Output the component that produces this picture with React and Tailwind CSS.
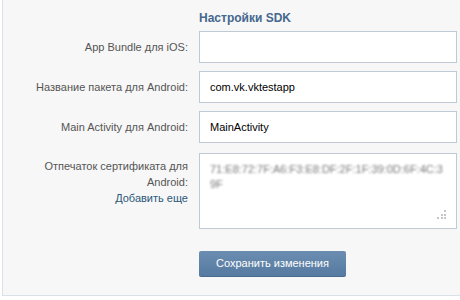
import React from "react";

const rows = [
  { label: "App Bundle для iOS:", value: "" },
  { label: "Название пакета для Android:", value: "com.vk.vktestapp" },
  { label: "Main Activity для Android:", value: "MainActivity" },
];

export default function App() {
  return (
    <div className="w-[460px] h-[300px] overflow-hidden bg-white font-['Liberation_Sans',Arial,sans-serif]">
      <div className="ml-[2px] w-[480px] h-[296px] bg-[#f7f7f7] border-l border-b border-[#dae1e8]">
        <div className="pl-[196px] pt-[9px] h-[31px] text-[12px] font-bold text-[#45688e]">
          Настройки SDK
        </div>

        <div className="flex flex-col gap-[8px]">
          {rows.map((row) => (
            <div key={row.label} className="flex items-center">
              <div className="w-[185px] text-right text-[11px] text-[#555]">
                {row.label}
              </div>
              <div className="ml-[11px] w-[258px] h-[32px] bg-white border border-[#c0cad5] flex items-center px-[10px] text-[11px] text-black">
                {row.value}
              </div>
            </div>
          ))}

          <div className="flex items-start mt-[2px]">
            <div className="w-[185px] pt-[5px] text-right text-[11px] leading-[16px] text-[#555]">
              <div>Отпечаток сертификата для</div>
              <div>Android:</div>
              <div className="text-[#2b587a]">Добавить еще</div>
            </div>
            <div className="relative ml-[11px] w-[258px] h-[76px] bg-white border border-[#c0cad5] px-[10px] pt-[8px] text-[11px] leading-[15px] text-[#7a7a7a]">
              <div className="blur-[1.2px] whitespace-nowrap">
                <div>71:E8:72:7F:A6:F3:E8:DF:2F:1F:39:0D:6F:4C:3</div>
                <div>9F</div>
              </div>
              <div className="absolute right-[10px] bottom-[9px] grid grid-cols-3 gap-[1.5px]">
                <span className="w-[2px] h-[2px]"></span>
                <span className="w-[2px] h-[2px]"></span>
                <span className="w-[2px] h-[2px] bg-[#c6c6c6]"></span>
                <span className="w-[2px] h-[2px]"></span>
                <span className="w-[2px] h-[2px] bg-[#c6c6c6]"></span>
                <span className="w-[2px] h-[2px] bg-[#c6c6c6]"></span>
                <span className="w-[2px] h-[2px] bg-[#c6c6c6]"></span>
                <span className="w-[2px] h-[2px] bg-[#c6c6c6]"></span>
                <span className="w-[2px] h-[2px] bg-[#c6c6c6]"></span>
              </div>
            </div>
          </div>

          <div className="pl-[196px] mt-[13px]">
            <button className="w-[147px] h-[26px] rounded-[2px] bg-gradient-to-b from-[#6b8db1] to-[#567aa0] border-b border-[#4a6b8f] text-white text-[11px]">
              Сохранить изменения
            </button>
          </div>
        </div>
      </div>
    </div>
  );
}
